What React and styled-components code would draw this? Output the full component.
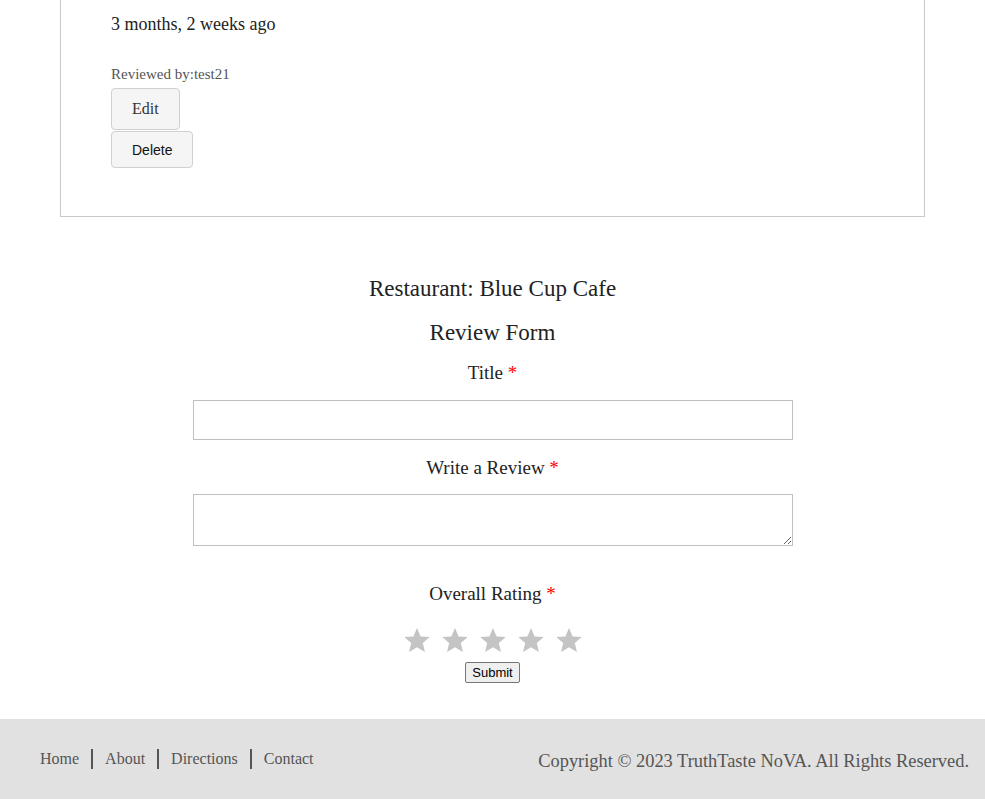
import React from "react";
import styled, { createGlobalStyle } from "styled-components";

const Global = createGlobalStyle`
  body {
    margin: 0;
    background: #fff;
    font-family: "Liberation Serif", "DejaVu Serif", serif;
    color: #222;
  }
`;

const Page = styled.div`
  display: flex;
  flex-direction: column;
  min-height: 799px;
`;

const Card = styled.div`
  margin: 0 60px;
  border: 1px solid #c8c8c8;
  border-top: none;
  padding: 6px 50px 48px;
`;

const Ago = styled.div`
  font-size: 18px;
  line-height: 36px;
  color: #222;
`;

const Reviewer = styled.div`
  margin-top: 22px;
  font-size: 15px;
  line-height: 20px;
  color: #555;
`;

const EditButton = styled.button`
  display: block;
  box-sizing: border-box;
  height: 42px;
  padding: 0 20px;
  margin-top: 4px;
  background: #f5f5f5;
  border: 1px solid #d0d0d0;
  border-radius: 4px;
  color: #333;
  font-family: "Liberation Serif", "DejaVu Serif", serif;
  font-size: 16px;
`;

const DeleteButton = styled(EditButton)`
  height: 37px;
  margin-top: 1px;
  color: #111;
  font-family: "Liberation Sans", Arial, sans-serif;
  font-size: 14px;
`;

const Form = styled.form`
  display: flex;
  flex-direction: column;
  align-items: center;
  padding-top: 56px;
`;

const Heading = styled.h2`
  margin: 0;
  font-weight: normal;
  font-size: 23px;
  line-height: 32px;
  margin-bottom: ${(p) => p.$mb}px;
`;

const Label = styled.label`
  font-size: 19px;
  line-height: 28px;
  color: #222;
  margin-bottom: ${(p) => p.$mb}px;
`;

const Star = styled.span`
  color: #ff0000;
`;

const TextInput = styled.input`
  box-sizing: border-box;
  width: 600px;
  height: 40px;
  border: 1px solid #c0c0c0;
  margin-bottom: 14px;
`;

const TextArea = styled.textarea`
  box-sizing: border-box;
  width: 600px;
  height: 52px;
  border: 1px solid #c0c0c0;
  margin-bottom: 34px;
  resize: vertical;
`;

const Stars = styled.div`
  display: flex;
  gap: 10px;
  margin-bottom: 8px;
`;

const Submit = styled.button`
  font-family: "Liberation Sans", Arial, sans-serif;
  font-size: 13px;
  padding: 1px 6px;
  height: 21px;
  background: #efefef;
  border: 1px solid #767676;
  border-radius: 2px;
  color: #000;
`;

const Footer = styled.footer`
  margin-top: 36px;
  height: 80px;
  background: #e1e1e1;
  display: flex;
  align-items: center;
  justify-content: space-between;
  padding: 0 16px 0 40px;
`;

const Links = styled.nav`
  display: flex;
  align-items: center;
  gap: 12px;
  font-size: 16px;
  color: #555;
`;

const Sep = styled.span`
  width: 2px;
  height: 20px;
  background: #555;
`;

const Copy = styled.div`
  font-size: 18.4px;
  color: #555;
  padding-top: 4px;
`;

const StarIcon = () => (
  <svg width="28" height="27" viewBox="0 0 24 23">
    <path
      d="M12 0.8l3.1 7.2 7.8 0.6-5.9 5.1 1.8 7.6L12 17.2l-6.8 4.1 1.8-7.6-5.9-5.1 7.8-0.6z"
      fill="#c4c4c4"
    />
  </svg>
);

export default function App() {
  const nav = ["Home", "About", "Directions", "Contact"];
  return (
    <Page>
      <Global />
      <Card>
        <Ago>3 months, 2 weeks ago</Ago>
        <Reviewer>Reviewed by:test21</Reviewer>
        <EditButton>Edit</EditButton>
        <DeleteButton>Delete</DeleteButton>
      </Card>
      <Form onSubmit={(e) => e.preventDefault()}>
        <Heading $mb={12}>Restaurant: Blue Cup Cafe</Heading>
        <Heading $mb={10}>Review Form</Heading>
        <Label $mb={13}>
          Title <Star>*</Star>
        </Label>
        <TextInput type="text" />
        <Label $mb={12}>
          Write a Review <Star>*</Star>
        </Label>
        <TextArea />
        <Label $mb={19}>
          Overall Rating <Star>*</Star>
        </Label>
        <Stars>
          {[0, 1, 2, 3, 4].map((i) => (
            <StarIcon key={i} />
          ))}
        </Stars>
        <Submit type="submit">Submit</Submit>
      </Form>
      <Footer>
        <Links>
          {nav.map((n, i) => (
            <React.Fragment key={n}>
              {i > 0 && <Sep />}
              <span>{n}</span>
            </React.Fragment>
          ))}
        </Links>
        <Copy>Copyright © 2023 TruthTaste NoVA. All Rights Reserved.</Copy>
      </Footer>
    </Page>
  );
}
